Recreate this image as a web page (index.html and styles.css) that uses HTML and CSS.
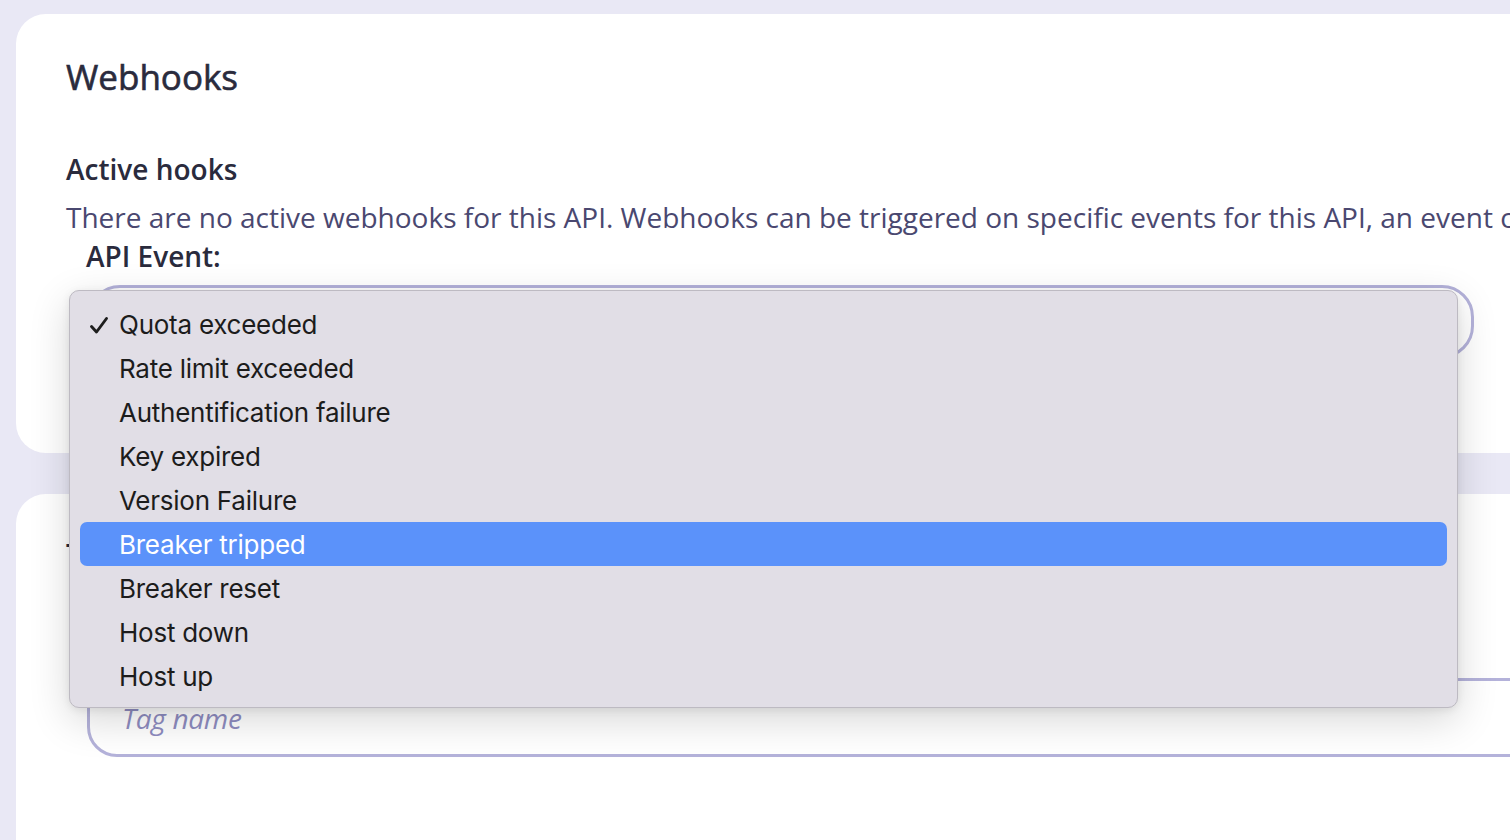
FILE: index.html
```html
<!DOCTYPE html>
<html lang="en">
<head>
<meta charset="utf-8">
<title>Webhooks</title>
<link rel="stylesheet" href="styles.css">
</head>
<body>
<div class="page">
  <section class="card card-hooks">
    <h1 class="title">Webhooks</h1>
    <h2 class="subtitle">Active hooks</h2>
    <p class="desc">There are no active webhooks for this API. Webhooks can be triggered on specific events for this API, an event can</p>
    <label class="label">API Event:</label>
    <div class="select-box"></div>
  </section>
  <section class="card card-tags">
    <h2 class="subtitle">Tags</h2>
    <div class="tag-input"><span class="placeholder">Tag name</span></div>
  </section>
</div>

<ul class="menu">
  <li class="item checked"><svg class="check" width="20" height="19" viewBox="0 0 20 19"><path d="M2.5 10.5 L7.5 16 L17.5 2.5" fill="none" stroke="#1e1e1e" stroke-width="2.9" stroke-linecap="round" stroke-linejoin="round"/></svg>Quota exceeded</li>
  <li class="item">Rate limit exceeded</li>
  <li class="item">Authentification failure</li>
  <li class="item">Key expired</li>
  <li class="item">Version Failure</li>
  <li class="item active">Breaker tripped</li>
  <li class="item">Breaker reset</li>
  <li class="item">Host down</li>
  <li class="item">Host up</li>
</ul>
</body>
</html>
```

FILE: styles.css
```css
html, body {
  margin: 0;
  padding: 0;
  width: 1510px;
  height: 840px;
  overflow: hidden;
  background: #e9e8f5;
  font-family: "Open Sans", "Noto Sans", sans-serif;
}

.page {
  display: flex;
  flex-direction: column;
  gap: 41px;
  padding: 14px 0 0 16px;
  width: 1700px;
}

.card {
  background: #ffffff;
  border-radius: 30px;
  padding: 42px 50px 95px 50px;
  display: flex;
  flex-direction: column;
  align-items: flex-start;
}

.card-hooks {
  height: 439px;
  box-sizing: border-box;
}

.card-tags {
  height: 400px;
  box-sizing: border-box;
}

.title {
  margin: 0;
  font-size: 35px;
  line-height: 42px;
  font-weight: 400;
  color: #2a2b3d;
  -webkit-text-stroke: 0.6px #2a2b3d;
}

.subtitle {
  margin: 53px 0 0 0;
  font-size: 28px;
  line-height: 36px;
  font-weight: 600;
  color: #2a2b3d;
}

.card-tags .subtitle {
  margin-top: 0;
}

.desc {
  margin: 12px 0 0 0;
  font-size: 28px;
  line-height: 36px;
  font-weight: 400;
  color: #4a4870;
  white-space: nowrap;
}

.label {
  margin: 3px 0 0 20px;
  font-size: 28px;
  line-height: 36px;
  font-weight: 600;
  color: #2a2b3d;
}

.select-box {
  margin: 11px 0 0 22px;
  width: 1386px;
  height: 73px;
  box-sizing: border-box;
  border: 3px solid #b4b2da;
  border-radius: 32px;
  background: #fff;
}

.tag-input {
  margin: 106px 0 0 21px;
  width: 1500px;
  height: 79px;
  box-sizing: border-box;
  border: 3px solid #b4b2da;
  border-radius: 30px;
  display: flex;
  align-items: center;
  padding-left: 32px;
}

.placeholder {
  font-size: 28px;
  font-style: italic;
  color: #8e8cc0;
  letter-spacing: -0.3px;
}

.menu {
  position: absolute;
  left: 69px;
  top: 290px;
  width: 1389px;
  height: 418px;
  box-sizing: border-box;
  margin: 0;
  padding: 11px 10px 10px 10px;
  list-style: none;
  background: #e1dee6;
  border: 1px solid #bdbac2;
  border-radius: 10px;
  box-shadow: 0 12px 40px rgba(0, 0, 0, 0.16), 0 2px 8px rgba(0, 0, 0, 0.08);
  font-family: Inter, "Noto Sans", sans-serif;
}

.item {
  position: relative;
  height: 44px;
  line-height: 46px;
  padding-left: 39px;
  font-size: 26px;
  color: #1c1c1c;
  border-radius: 7px;
  letter-spacing: -0.25px;
}

.item.active {
  background: #5b92fa;
  color: #ffffff;
}

.check {
  position: absolute;
  left: 9px;
  top: 14px;
}
```
